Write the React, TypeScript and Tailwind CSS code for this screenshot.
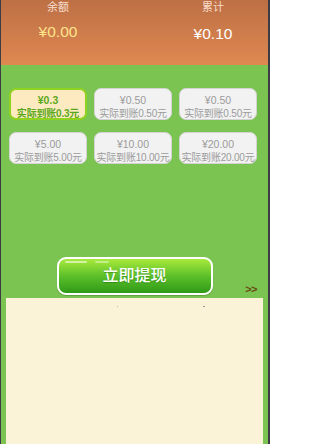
import React from "react";

const font = { fontFamily: '"Liberation Sans", "Noto Sans CJK SC", sans-serif' };

type Opt = { amt: string; real: string; sel?: boolean };
const opts: Opt[] = [
  { amt: "¥0.3", real: "实际到账0.3元", sel: true },
  { amt: "¥0.50", real: "实际到账0.50元" },
  { amt: "¥0.50", real: "实际到账0.50元" },
  { amt: "¥5.00", real: "实际到账5.00元" },
  { amt: "¥10.00", real: "实际到账10.00元" },
  { amt: "¥20.00", real: "实际到账20.00元" },
];

export default function App() {
  return (
    <div className="w-[270px] h-[444px] bg-[#3b3c44] flex pl-[1px] pr-[2px] overflow-hidden" style={font}>
      <div className="flex-1 flex flex-col bg-[#7bc452]">
        {/* header */}
        <div className="h-[65px] bg-gradient-to-b from-[#bd7045] to-[#df8851] flex justify-between pl-[17px] pr-[15px]">
          <div className="w-[80px] flex flex-col items-center">
            <div className="text-[11px] leading-[14px] text-[#f6dccb]">余额</div>
            <div className="text-[15.5px] leading-[18px] text-[#fde48c] mt-[9px]">¥0.00</div>
          </div>
          <div className="w-[80px] flex flex-col items-center">
            <div className="text-[11px] leading-[14px] text-[#f6dccb]">累计</div>
            <div className="text-[15.5px] leading-[18px] text-white font-medium mt-[11px]">¥0.10</div>
          </div>
        </div>

        {/* options */}
        <div className="mt-[23px] ml-[8px] grid grid-cols-[78px_78px_78px] gap-x-[7px] gap-y-[12px]">
          {opts.map((o, i) => (
            <div
              key={i}
              className={
                o.sel
                  ? "h-[32px] rounded-[7px] border-2 border-[#8fd21f] bg-[#fdeac0] flex flex-col items-center pt-[4px] text-[#5aa81b] font-bold"
                  : "h-[32px] rounded-[7px] border border-[#d3d3d3] bg-[#f2f2f2] flex flex-col items-center pt-[5px] text-[#9b9b9b]"
              }
            >
              <div className="text-[10.5px] leading-[13px]">{o.amt}</div>
              <div className="text-[10px] leading-[13px] whitespace-nowrap tracking-[-0.2px]">{o.real}</div>
            </div>
          ))}
        </div>

        {/* button row */}
        <div className="mt-[93px] grid grid-cols-[1fr_auto_1fr] items-end">
          <div />
          <div className="relative w-[156px] h-[38px] rounded-[9px] border-2 border-white bg-gradient-to-b from-[#a8ea3c] via-[#5cc02a] to-[#2e9a17] flex items-center justify-center shadow-[0_1px_1px_rgba(0,0,0,0.2)]">
            <div className="absolute top-[2px] left-[6px] w-[22px] h-[2px] rounded-full bg-white/55" />
            <div className="absolute top-[2px] left-[36px] w-[14px] h-[2px] rounded-full bg-white/40" />
            <span className="text-white text-[16px] leading-[20px] font-medium [text-shadow:0_1px_1px_rgba(0,80,0,0.35)]">立即提现</span>
          </div>
          <div className="flex justify-end pr-[11px] pb-[1px]">
            <span className="text-[11px] leading-[10px] font-bold text-[#6a4a12] tracking-[-0.5px]">&gt;&gt;</span>
          </div>
        </div>

        {/* panel */}
        <div className="mt-[3px] mx-[5px] flex-1 bg-[#faf3d8] relative">
          <div className="absolute left-[111px] top-[8px] w-[1px] h-[1px] bg-[#bbb]" />
          <div className="absolute left-[197px] top-[8px] w-[2px] h-[1px] bg-[#999]" />
        </div>
      </div>
    </div>
  );
}
